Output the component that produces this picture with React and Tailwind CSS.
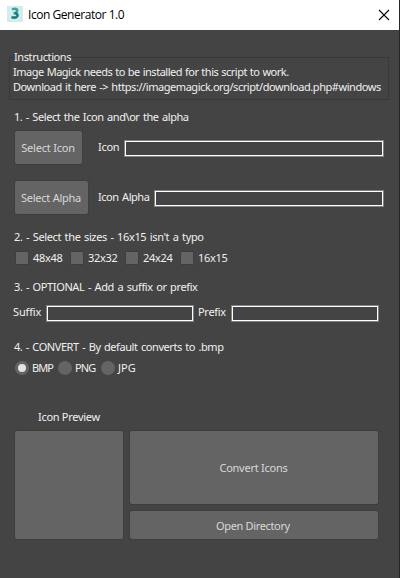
import React from "react";

const button =
  "flex items-center justify-center rounded-[2px] bg-[#646464] text-[#d8d8d8] shadow-[0_0_0_1px_#3e3e3e] whitespace-nowrap";

function Field({ className }) {
  return (
    <div className={`h-[17px] border border-[#828282] ${className}`}>
      <div className="h-full border border-white" />
    </div>
  );
}

function Heading({ className = "", children }) {
  return (
    <div className={`h-4 pl-[14px] leading-4 [word-spacing:1px] whitespace-nowrap ${className}`}>{children}</div>
  );
}

function Check({ children }) {
  return (
    <div className="flex w-[55px] items-center gap-[5px]">
      <span className="-mt-px size-3 shrink-0 bg-[#646464] shadow-[0_0_0_1px_#3e3e3e]" />
      <span className="leading-4 tracking-[-0.3px] whitespace-nowrap">{children}</span>
    </div>
  );
}

function Radio({ checked, className, children }) {
  return (
    <div className="flex w-[43px] items-center gap-[3px]">
      <span className="flex size-[14px] shrink-0 items-center justify-center rounded-full bg-[#646464]">
        {checked && <span className="size-2 rounded-full bg-[#e4e4e4]" />}
      </span>
      <span className={`leading-4 whitespace-nowrap ${className}`}>{children}</span>
    </div>
  );
}

export default function App() {
  return (
    <div className="h-[578px] w-[400px] overflow-hidden border-r border-[#262626] bg-[#444444] font-['Noto_Sans',sans-serif] text-[11px] text-[#f0f0f0]">
      <header className="-mr-px flex h-[30px] items-center bg-white pl-[7px] text-black">
        <svg className="-mt-[2px]" width="16" height="16" viewBox="0 0 16 16">
          <rect width="16" height="16" fill="#d5ecec" />
          <path d="M5 3.5 Q8 2 10 3.5 Q10.8 6 8.5 7.2 H6.5" fill="none" stroke="#35a7a4" strokeWidth="2.5" />
          <path d="M7.5 7 Q11.3 7.4 10.3 10.2 Q8.5 12.5 4.5 11" fill="none" stroke="#17807e" strokeWidth="2.6" />
        </svg>
        <h1 className="ml-[5px] font-['Open_Sans',sans-serif] text-[12px] leading-4 tracking-[-0.45px] whitespace-nowrap">Icon Generator 1.0</h1>
        <svg className="-mt-px mr-[10px] ml-auto" width="12" height="12" viewBox="0 0 12 12">
          <path d="M1 1 L11 11 M11 1 L1 11" stroke="#000" strokeWidth="1.1" />
        </svg>
      </header>

      <main className="pt-[19px]">
        <fieldset className="ml-[9px] h-[51px] w-[380px] border border-[#393939] pl-[3px]">
          <legend className="h-4 px-px leading-4 tracking-[-0.4px] whitespace-nowrap">Instructions</legend>
          <p className="-mt-px h-[15px] leading-[15px] tracking-[-0.48px] [word-spacing:0.5px] whitespace-nowrap">Image Magick needs to be installed for this script to work.</p>
          <p className="h-[15px] leading-[15px] tracking-[-0.44px] [word-spacing:0.8px] whitespace-nowrap">Download it here -&gt; https://imagemagick.org/script/download.php#windows</p>
        </fieldset>

        <Heading className="mt-[9px] tracking-[-0.43px]">1. - Select the Icon and\or the alpha</Heading>
        <div className="mt-[6px] flex h-[33px] pl-[15px]">
          <button className={`${button} h-[33px] w-[67px] pt-px pr-px tracking-[-0.2px]`}>Select Icon</button>
          <span className="mt-2 ml-4 w-[26px] leading-4 tracking-[-0.3px] whitespace-nowrap">Icon</span>
          <Field className="mt-[9px] w-[260px]" />
        </div>
        <div className="mt-[17px] flex h-[33px] pl-[15px]">
          <button className={`${button} h-[33px] w-[73px] pt-px pr-px tracking-[-0.25px]`}>Select Alpha</button>
          <span className="mt-2 ml-[10px] w-[56px] leading-4 tracking-[-0.45px] [word-spacing:1px] whitespace-nowrap">Icon Alpha</span>
          <Field className="mt-[9px] w-[230px]" />
        </div>

        <Heading className="mt-[15px] tracking-[-0.36px]">2. - Select the sizes - 16x15 isn't a typo</Heading>
        <div className="mt-[5px] flex h-4 pl-4">
          <Check>48x48</Check>
          <Check>32x32</Check>
          <Check>24x24</Check>
          <Check>16x15</Check>
        </div>

        <Heading className="mt-[13px] tracking-[-0.38px]">3. - OPTIONAL - Add a suffix or prefix</Heading>
        <div className="mt-[9px] flex h-[18px] pl-[13px]">
          <span className="w-[33px] leading-4 tracking-[-0.15px]">Suffix</span>
          <Field className="mt-px w-[148px]" />
          <span className="ml-[4px] w-[33px] leading-4 tracking-[-0.3px]">Prefix</span>
          <Field className="mt-px w-[148px]" />
        </div>

        <Heading className="mt-[17px] tracking-[-0.43px]">4. - CONVERT - By default converts to .bmp</Heading>
        <div className="mt-[5px] flex h-4 pl-[15px]">
          <Radio checked className="tracking-[-0.9px]">BMP</Radio>
          <Radio className="tracking-[-0.9px]">PNG</Radio>
          <Radio className="tracking-[0px]">JPG</Radio>
        </div>

        <div className="mt-[33px] h-4 pl-[38px] leading-4 tracking-[-0.3px]">Icon Preview</div>
        <div className="mt-[6px] flex gap-[7px] pl-[15px]">
          <div className={`${button} h-[108px] w-[108px]`} />
          <div className="flex w-[248px] flex-col gap-[7px]">
            <button className={`${button} h-[73px] pt-[2px] pr-px tracking-[-0.25px]`}>Convert Icons</button>
            <button className={`${button} h-[28px] pt-[2px] pr-[2px] tracking-[-0.35px]`}>Open Directory</button>
          </div>
        </div>
      </main>
    </div>
  );
}
